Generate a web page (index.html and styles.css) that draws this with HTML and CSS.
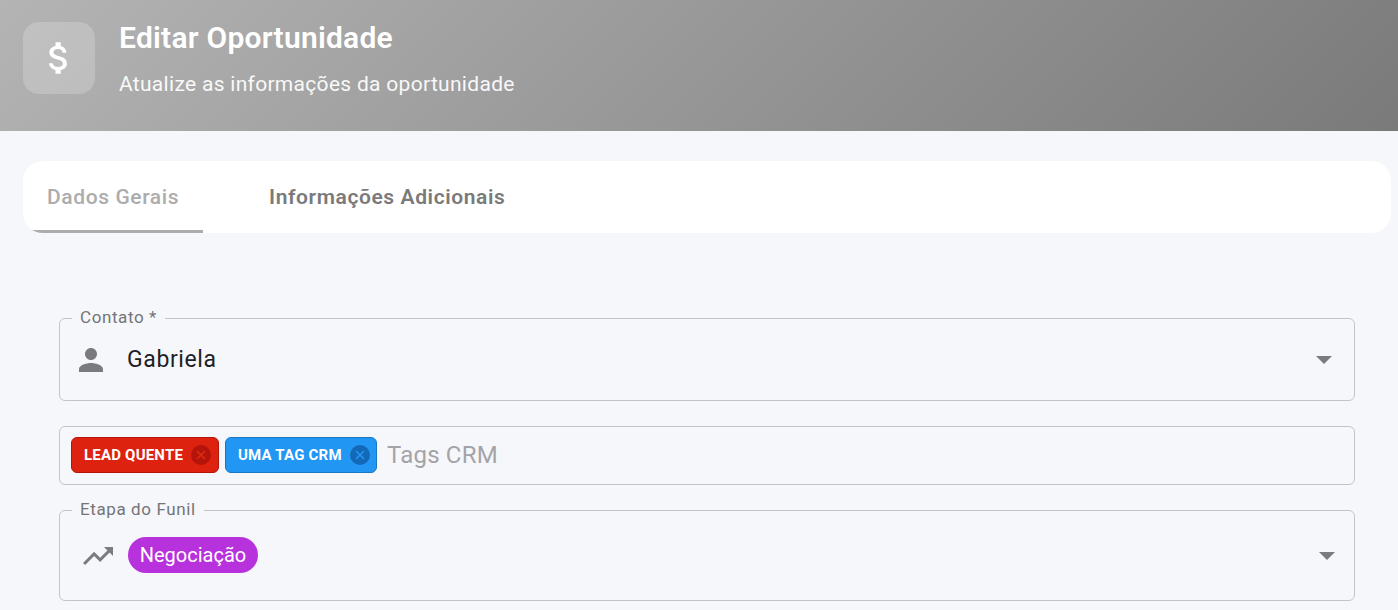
FILE: index.html
```html
<!DOCTYPE html>
<html lang="pt-BR">
<head>
<meta charset="utf-8">
<title>Editar Oportunidade</title>
<link rel="stylesheet" href="styles.css">
</head>
<body>
<header class="hero">
  <div class="hero-icon">
    <svg viewBox="0 0 24 24" width="42" height="42"><path fill="#fff" d="M11.8 10.9c-2.27-.59-3-1.2-3-2.15 0-1.09 1.01-1.85 2.7-1.85 1.78 0 2.44.85 2.5 2.1h2.21c-.07-1.72-1.12-3.3-3.21-3.81V3h-3v2.16c-1.94.42-3.5 1.68-3.5 3.61 0 2.31 1.91 3.46 4.7 4.13 2.5.6 3 1.48 3 2.41 0 .69-.49 1.79-2.7 1.79-2.06 0-2.87-.92-2.98-2.1h-2.2c.12 2.19 1.76 3.42 3.68 3.83V21h3v-2.15c1.95-.37 3.5-1.5 3.5-3.55 0-2.84-2.43-3.81-4.7-4.4z"/></svg>
  </div>
  <div class="hero-text">
    <h1 class="hero-title">Editar Oportunidade</h1>
    <p class="hero-sub">Atualize as informações da oportunidade</p>
  </div>
</header>

<main class="content">
  <nav class="tabs">
    <div class="tab tab-active">Dados Gerais</div>
    <div class="tab tab-other">Informações Adicionais</div>
  </nav>

  <form class="form">
    <div class="field field-contact">
      <span class="float-label">Contato *</span>
      <svg class="lead-icon" viewBox="0 0 24 24" width="36" height="36"><path fill="#7b7b7f" d="M12 12c2.21 0 4-1.79 4-4s-1.79-4-4-4-4 1.79-4 4 1.79 4 4 4zm0 2c-2.67 0-8 1.34-8 4v2h16v-2c0-2.66-5.33-4-8-4z"/></svg>
      <span class="value">Gabriela</span>
      <span class="caret"></span>
    </div>

    <div class="field field-tags">
      <span class="chip chip-red">LEAD QUENTE
        <svg class="chip-x" viewBox="0 0 20 20" width="20" height="20"><circle cx="10" cy="10" r="10" fill="#b5140a"/><path d="M6 6l8 8M14 6l-8 8" stroke="#dd2c12" stroke-width="1.6"/></svg>
      </span>
      <span class="chip chip-blue">UMA TAG CRM
        <svg class="chip-x" viewBox="0 0 20 20" width="20" height="20"><circle cx="10" cy="10" r="10" fill="#1468b8"/><path d="M6 6l8 8M14 6l-8 8" stroke="#2196f3" stroke-width="1.6"/></svg>
      </span>
      <span class="placeholder">Tags CRM</span>
    </div>

    <div class="field field-stage">
      <span class="float-label">Etapa do Funil</span>
      <svg class="stage-icon" viewBox="0 0 24 24" width="36" height="36"><path fill="#7b7b7f" d="M16 6l2.29 2.29-4.88 4.88-4-4L2 16.59 3.41 18l6-6 4 4 6.3-6.29L22 12V6z"/></svg>
      <span class="pill">Negociação</span>
      <span class="caret"></span>
    </div>
  </form>
</main>
</body>
</html>
```

FILE: styles.css
```css
* { box-sizing: border-box; }
html, body { margin: 0; height: 610px; overflow: hidden; }
body {
  background: #f6f7fb;
  font-family: Roboto, "Liberation Sans", sans-serif;
}

.hero {
  height: 131px;
  padding: 22px 23px 0;
  display: flex;
  gap: 24px;
  align-items: flex-start;
  background: linear-gradient(135deg, #b4b4b4 0%, #7a7a7a 100%);
  color: #fff;
}
.hero-icon {
  width: 72px;
  height: 72px;
  border-radius: 16px;
  background: rgba(255, 255, 255, 0.2);
  display: flex;
  align-items: center;
  justify-content: center;
}
.hero-text { display: flex; flex-direction: column; }
.hero-title {
  margin: 0;
  font-size: 30px;
  line-height: 32px;
  font-weight: 600;
  letter-spacing: 0.25px;
}
.hero-sub {
  margin: 18px 0 0;
  font-size: 21px;
  line-height: 24px;
  letter-spacing: 0.3px;
  opacity: 0.93;
}

.content { padding: 30px 7px 0 23px; }
.tabs {
  height: 72px;
  background: #fff;
  border-radius: 20px;
  overflow: hidden;
  display: flex;
}
.tab {
  display: flex;
  align-items: center;
  font-size: 21px;
  letter-spacing: 0.6px;
  white-space: nowrap;
}
.tab-active {
  width: 180px;
  padding: 3px 0 0 24px;
  color: #acacac;
  font-weight: 500;
  border-bottom: 3px solid #acacac;
}
.tab-other {
  padding: 0 24px 0 66px;
  color: #7a7a7a;
  font-weight: 600;
}

.form {
  padding: 85px 36px 0;
  display: flex;
  flex-direction: column;
}
.field {
  position: relative;
  display: flex;
  align-items: center;
  border: 1px solid #c4c4c8;
  border-radius: 6px;
}
.float-label {
  position: absolute;
  top: -12px;
  left: 12px;
  padding: 0 8px;
  background: #f6f7fb;
  color: #747478;
  font-size: 17px;
  line-height: 20px;
  letter-spacing: 0.6px;
}
.field-contact { height: 83px; padding: 0 22px 0 13px; }
.field-tags { height: 59px; margin-top: 25px; padding: 0 11px 2px; gap: 6px; }
.field-stage { height: 91px; margin-top: 25px; padding: 0 19px 0 20px; }

.value {
  margin-left: 18px;
  font-size: 23px;
  color: #212125;
  letter-spacing: 0.6px;
}
.caret {
  margin-left: auto;
  width: 0;
  height: 0;
  border-left: 8px solid transparent;
  border-right: 8px solid transparent;
  border-top: 8px solid #7b7b7f;
}

.chip {
  height: 36px;
  display: inline-flex;
  align-items: center;
  justify-content: space-between;
  padding: 0 7px 0 12px;
  border-radius: 6px;
  color: #fff;
  font-size: 15px;
  font-weight: 700;
  letter-spacing: 0.2px;
  white-space: nowrap;
}
.chip-red { width: 148px; background: #dd2210; border: 1px solid #b5140a; }
.chip-blue { width: 152px; padding-right: 6px; background: #2196f3; border: 1px solid #1a78c2; }
.placeholder {
  margin-left: 4px;
  color: #a4a4a8;
  font-size: 24px;
  letter-spacing: 0.2px;
}

.pill {
  margin: 0 0 2px 12px;
  height: 36px;
  width: 130px;
  border-radius: 18px;
  background: #b731dc;
  color: #fff;
  display: flex;
  align-items: center;
  justify-content: center;
  font-size: 20px;
}
```
